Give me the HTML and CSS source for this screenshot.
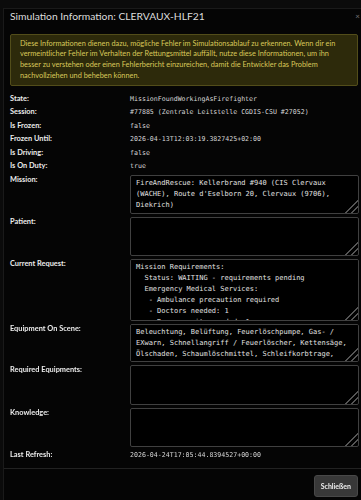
FILE: index.html
```html
<!DOCTYPE html>
<html>
	<head>
		<meta charset="utf-8">
		<link rel="stylesheet" href="styles.css">
	</head>
	<body>
		<div class="modal">
			<div class="modal-header">
				<span class="modal-title">Simulation Information: CLERVAUX-HLF21</span>
				<span class="modal-close">&times;</span>
			</div>
			<div class="modal-body">
				<div class="alert">Diese Informationen dienen dazu, mögliche Fehler im Simulationsablauf zu erkennen. Wenn dir ein vermeintlicher Fehler im Verhalten der Rettungsmittel auffällt, nutze diese Informationen, um ihn besser zu verstehen oder einen Fehlerbericht einzureichen, damit die Entwickler das Problem nachvollziehen und beheben können.</div>
				<div class="info">
					<label>State:</label>
					<span class="value">MissionFoundWorkingAsFirefighter</span>
					<label>Session:</label>
					<span class="value">#77885 (Zentrale Leitstelle CGDIS-CSU #27052)</span>
					<label>Is Frozen:</label>
					<span class="value">false</span>
					<label>Frozen Until:</label>
					<span class="value">2026-04-13T12:03:19.3827425+02:00</span>
					<label>Is Driving:</label>
					<span class="value">false</span>
					<label>Is On Duty:</label>
					<span class="value">true</span>
					<label for="mission">Mission:</label>
					<textarea id="mission" class="h-mission" readonly>FireAndRescue: Kellerbrand #940 (CIS Clervaux
(WACHE), Route d'Eselborn 20, Clervaux (9706),
Diekrich)</textarea>
					<label for="patient">Patient:</label>
					<textarea id="patient" class="h-patient" readonly></textarea>
					<label for="request">Current Request:</label>
					<textarea id="request" class="h-request" readonly>Mission Requirements:
  Status: WAITING - requirements pending
  Emergency Medical Services:
   - Ambulance precaution required
   - Doctors needed: 1
   - Rescue units needed: 1
  Fire Department:
   - Vehicles needed: 3</textarea>
					<label for="equipment">Equipment On Scene:</label>
					<textarea id="equipment" class="h-equip" readonly>Beleuchtung, Belüftung, Feuerlöschpumpe, Gas- /
EXwarn, Schnellangriff / Feuerlöscher, Kettensäge,
Ölschaden, Schaumlöschmittel, Schleifkorbtrage,
Schlauchmaterial, Sprungpolster, Wärmebild</textarea>
					<label for="required">Required Equipments:</label>
					<textarea id="required" class="h-required" readonly></textarea>
					<label for="knowledge">Knowledge:</label>
					<textarea id="knowledge" class="h-knowledge" readonly></textarea>
					<label>Last Refresh:</label>
					<span class="value">2026-04-24T17:05:44.8394527+00:00</span>
				</div>
			</div>
			<div class="modal-footer">
				<button>Schließen</button>
			</div>
		</div>
	</body>
</html>
```

FILE: styles.css
```css
body {
	margin: 0;
	height: 500px;
	overflow: hidden;
	background: #0b0b0b;
	font-family: Lato, "Open Sans", sans-serif;
	color: #e6e6e6;
}
.modal {
	margin: 8px 0 0 3px;
	background: #050505;
	border-top: solid 1px #1a1a1a;
	border-left: solid 1px #1a1a1a;
	height: 600px;
}
.modal-header {
	display: flex;
	justify-content: space-between;
	align-items: center;
	height: 13px;
	padding: 0 1px 0 6px;
}
.modal-title {
	font-size: 10.3px;
	color: #dcdcdc;
}
.modal-close {
	font-size: 8px;
	color: #777;
}
.modal-body {
	padding: 12px 2px 8px 6px;
}
.alert {
	margin-right: 1px;
	padding: 3.5px 9px;
	background: #2d2a0b;
	border: solid 1px #524d1a;
	border-radius: 2px;
	color: #d9c95a;
	font-size: 7.35px;
	line-height: 10.7px;
}
.info {
	margin-top: 8px;
	display: grid;
	grid-template-columns: 120px 1fr;
	row-gap: 3px;
	align-items: start;
}
.info label {
	font-weight: bold;
	font-size: 7.4px;
	line-height: 10.5px;
	color: #ececec;
}
.info .value {
	font-family: "DejaVu Sans Mono", monospace;
	font-size: 6.6px;
	line-height: 10.5px;
	color: #d6d6d6;
}
.info textarea {
	box-sizing: border-box;
	width: 100%;
	margin: 0;
	padding: 2px 5px;
	background: #000;
	color: #e0e0e0;
	border: solid 1px #404040;
	border-radius: 2px;
	outline: none;
	font-family: "DejaVu Sans Mono", monospace;
	font-size: 7px;
	line-height: 11px;
}
.info textarea::-webkit-scrollbar {
	width: 4px;
	background: #000;
}
.info textarea::-webkit-scrollbar-thumb {
	background: #e8e8e8;
	border-radius: 1px;
}
.info textarea::-webkit-resizer {
	background: linear-gradient(135deg, transparent 55%, #555 55%, #555 62%, transparent 62%, transparent 75%, #555 75%, #555 82%, transparent 82%);
}
.h-mission { height: 39px; }
.h-patient { height: 39px; }
.h-request { height: 62px; }
.h-equip { height: 38px; }
.h-required { height: 40px; }
.h-knowledge { height: 39px; }
.modal-footer {
	border-top: solid 1px #222;
	padding: 6px 3px;
	display: flex;
	justify-content: flex-end;
}
.modal-footer button {
	height: 22px;
	padding: 0 6px;
	background: #383838;
	color: #eee;
	border: solid 1px #484848;
	border-radius: 3px;
	font-family: Lato, sans-serif;
	font-weight: bold;
	font-size: 7px;
}
```
